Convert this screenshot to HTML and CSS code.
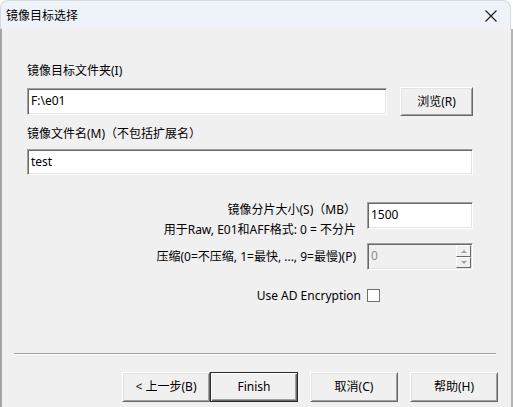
FILE: index.html
```html
<!DOCTYPE html>
<html lang="zh-CN">
<head>
    <meta charset="UTF-8">
    <meta name="viewport" content="width=device-width, initial-scale=1.0">
    <title>镜像目标选择</title>
    <link rel="stylesheet" href="styles.css">
</head>
<body>
    <div class="window">
        <div class="titlebar">
            <span class="title">镜像目标选择</span>
            <svg class="close" width="12" height="12" viewBox="0 0 12 12">
                <path d="M0.5 0.5 L11.5 11.5 M11.5 0.5 L0.5 11.5" stroke="#1a1a1a" stroke-width="1.1" fill="none"/>
            </svg>
        </div>
        <div class="panel">
            <div class="content">
                <div class="label">镜像目标文件夹(I)</div>
                <div class="folder-row">
                    <div class="field folder">F:\e01</div>
                    <div class="btn browse">浏览(R)</div>
                </div>
                <div class="label label-name">镜像文件名(M)（不包括扩展名）</div>
                <div class="field name">test</div>

                <div class="options">
                    <div class="opt-label two-line">镜像分片大小(S)（MB）<br>用于Raw, E01和AFF格式: 0 = 不分片</div>
                    <div class="field size">1500</div>
                    <div class="opt-label">压缩(0=不压缩, 1=最快, ..., 9=最慢)(P)</div>
                    <div class="field spin">
                        <span class="spin-value">0</span>
                        <span class="spin-btns">
                            <span class="spin-btn"><i class="arrow up"></i></span>
                            <span class="spin-btn"><i class="arrow down"></i></span>
                        </span>
                    </div>
                </div>

                <div class="check-row">
                    <span>Use AD Encryption</span>
                    <span class="checkbox"></span>
                </div>
            </div>

            <div class="sep"></div>

            <div class="footer">
                <div class="btn">&lt; 上一步(B)</div>
                <div class="btn default">Finish</div>
                <div class="btn gap">取消(C)</div>
                <div class="btn gap">帮助(H)</div>
            </div>
        </div>
    </div>
</body>
</html>
```

FILE: styles.css
```css
body {
    margin: 0;
    padding: 0;
    background: #ffffff;
    font-family: "Noto Sans", "Noto Sans CJK SC", sans-serif;
    font-size: 12px;
    color: #000;
}

.window {
    width: 513px;
    height: 407px;
    display: flex;
    flex-direction: column;
    overflow: hidden;
}

.titlebar {
    height: 28px;
    background: #eef3f9;
    border: 1px solid #d6d9de;
    border-bottom: none;
    border-radius: 8px 8px 0 0;
    margin-right: 2px;
    display: flex;
    align-items: center;
    justify-content: space-between;
    padding: 0 13px 0 5px;
}

.title {
    line-height: 16px;
    margin-top: 1px;
}

.close {
    margin-top: 1px;
}

.panel {
    flex: 1;
    background: #f0f0f0;
    border-left: 2px solid #a3a3a3;
    border-right: 2px solid #b4b4b4;
    display: flex;
    flex-direction: column;
}

.content {
    padding: 34px 38px 0 25px;
}

.label {
    line-height: 16px;
}

.folder-row {
    display: flex;
    align-items: center;
    justify-content: space-between;
    margin-top: 8px;
}

/* sunken edit box */
.field {
    box-sizing: border-box;
    height: 27px;
    background: #fff;
    border-top: 1px solid #a0a0a0;
    border-left: 1px solid #a0a0a0;
    border-right: 1px solid #fff;
    border-bottom: 1px solid #fff;
    box-shadow: inset 1px 1px 0 #696969, inset -1px -1px 0 #e3e3e3;
    padding: 4px 3px 0 3px;
    line-height: 16px;
}

.folder {
    width: 360px;
}

.label-name {
    margin-top: 10px;
}

.name {
    margin-top: 7px;
    height: 26px;
}

.options {
    display: grid;
    grid-template-columns: 1fr 106px;
    column-gap: 11px;
    row-gap: 3px;
    margin-top: 25px;
}

.opt-label {
    text-align: right;
    align-self: center;
    line-height: 16px;
}

.two-line {
    line-height: 20px;
    align-self: start;
}

.size {
    margin-top: 2px;
}

.spin {
    display: flex;
    background: #f0f0f0;
    padding: 0 0 0 3px;
}

.spin-value {
    flex: 1;
    color: #8b8b8b;
    padding-top: 4px;
}

.spin-btns {
    display: flex;
    flex-direction: column;
    width: 15px;
    margin: 1px 1px 1px 0;
}

.spin-btn {
    box-sizing: border-box;
    height: 12px;
    background: #f0f0f0;
    border-top: 1px solid #fff;
    border-left: 1px solid #fff;
    border-right: 1px solid #696969;
    border-bottom: 1px solid #696969;
    display: flex;
    align-items: center;
    justify-content: center;
}

.spin-btn + .spin-btn {
    height: 11px;
}

.arrow {
    width: 0;
    height: 0;
    border-left: 3px solid transparent;
    border-right: 3px solid transparent;
}

.arrow.up {
    border-bottom: 3px solid #a0a0a0;
}

.arrow.down {
    border-top: 3px solid #a0a0a0;
}

.check-row {
    display: flex;
    justify-content: flex-end;
    align-items: center;
    gap: 6px;
    padding-right: 93px;
    margin-top: 18px;
    height: 14px;
}

.checkbox {
    box-sizing: border-box;
    width: 13px;
    height: 13px;
    background: #fff;
    border: 1px solid #707070;
}

.sep {
    margin: 51px 15px 0 12px;
    border-top: 1px solid #a0a0a0;
    border-bottom: 1px solid #fff;
}

.footer {
    display: flex;
    justify-content: flex-end;
    margin-top: 17px;
    padding-right: 13px;
}

/* raised push button */
.btn {
    box-sizing: border-box;
    width: 88px;
    height: 30px;
    background: #f0f0f0;
    border-top: 1px solid #fff;
    border-left: 1px solid #fff;
    border-right: 1px solid #696969;
    border-bottom: 1px solid #696969;
    box-shadow: inset 1px 1px 0 #e3e3e3, inset -1px -1px 0 #a0a0a0;
    display: flex;
    align-items: center;
    justify-content: center;
    line-height: 16px;
}

.browse {
    width: 73px;
    height: 29px;
}

.btn.default {
    border: 1px solid #2b2b2b;
    box-shadow: inset 1px 1px 0 #fff, inset -1px -1px 0 #696969, inset -2px -2px 0 #a0a0a0;
}

.btn.gap {
    margin-left: 12px;
}
```
